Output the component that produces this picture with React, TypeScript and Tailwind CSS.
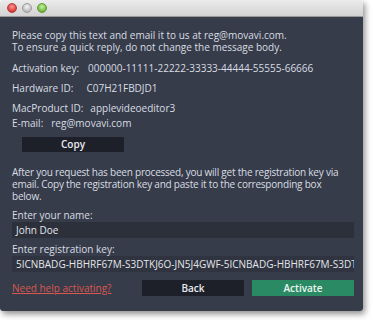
import React from 'react';

const font = { fontFamily: '"Open Sans", "DejaVu Sans", sans-serif' };

function Row({ label, value, gap }: { label: string; value: string; gap: string }) {
    return (
        <div className="flex h-[12px]">
            <span>{label}</span>
            <span className={gap}>{value}</span>
        </div>
    );
}

export default function App() {
    return (
        <div className="w-[374px] h-[320px] bg-white overflow-hidden" style={font}>
            <div className="w-[363px] h-[311px] flex flex-col rounded-[3px] overflow-hidden shadow-[2px_3px_6px_rgba(0,0,0,0.45)]">
                {/* title bar */}
                <div className="h-[17px] shrink-0 flex items-center gap-[5px] pl-[7px] bg-gradient-to-b from-[#ececec] to-[#d2d2d2] border-b border-[#9a9a9a]">
                    <span className="w-[10px] h-[10px] rounded-full bg-[radial-gradient(circle_at_50%_35%,#ff9a9a,#e0443f_60%,#a52a26)] border border-[#b0413c]" />
                    <span className="w-[10px] h-[10px] rounded-full bg-[radial-gradient(circle_at_50%_35%,#f4f4f4,#c4c4c4_60%,#9a9a9a)] border border-[#9c9c9c]" />
                    <span className="w-[10px] h-[10px] rounded-full bg-[radial-gradient(circle_at_50%_35%,#c8f0a0,#7cc04a_60%,#4f8e2a)] border border-[#5d9a36]" />
                </div>

                <div className="flex-1 flex flex-col bg-[#363c4a] text-[#d9dce2] text-[10px] leading-[12px] pl-[12px] pr-[9px] pt-[12px]">
                    <p>Please copy this text and email it to us at reg@movavi.com.</p>
                    <p>To ensure a quick reply, do not change the message body.</p>

                    <div className="mt-[9px] flex flex-col gap-[8px]">
                        <Row label="Activation key:" value="000000-11111-22222-33333-44444-55555-66666" gap="ml-[9px]" />
                        <Row label="Hardware ID:" value="C07H21FBDJD1" gap="ml-[13px]" />
                        <Row label="MacProduct ID:" value="applevideoeditor3" gap="ml-[7px]" />
                    </div>
                    <div className="mt-[3px]">
                        <Row label="E-mail:" value="reg@movavi.com" gap="ml-[8px]" />
                    </div>

                    <button className="block mt-[8px] ml-[10px] w-[102px] h-[15px] bg-[#1d2029] text-[#e8eaee] font-semibold text-[10px] leading-[15px]">
                        Copy
                    </button>

                    <p className="mt-[14px] tracking-[-0.22px] pr-[2px]">
                        After you request has been processed, you will get the registration key via email. Copy the registration key and paste it to the corresponding box below.
                    </p>

                    <p className="mt-[7px]">Enter your name:</p>
                    <div className="mt-[1px] h-[16px] bg-[#2b303b] pl-[4px] leading-[16px] text-[#e4e6ea]">John Doe</div>

                    <p className="mt-[5px]">Enter registration key:</p>
                    <div className="mt-[1px] h-[16px] bg-[#2f3440] pl-[4px] leading-[16px] text-[#e4e6ea] whitespace-nowrap overflow-hidden">
                        5ICNBADG-HBHRF67M-S3DTKJ6O-JN5J4GWF-5ICNBADG-HBHRF67M-S3DTKJ6O-JN5J4GWF
                    </div>

                    <div className="mt-[8px] flex items-center">
                        <a className="text-[#d9584f] underline flex-1">Need help activating?</a>
                        <button className="w-[102px] h-[16px] bg-[#1d2029] text-[#e8eaee] font-semibold text-[10px] leading-[16px]">Back</button>
                        <button className="ml-[8px] w-[102px] h-[16px] bg-[#2a8a63] text-[#eef5f0] font-semibold text-[10px] leading-[16px]">Activate</button>
                    </div>
                </div>
            </div>
        </div>
    );
}
